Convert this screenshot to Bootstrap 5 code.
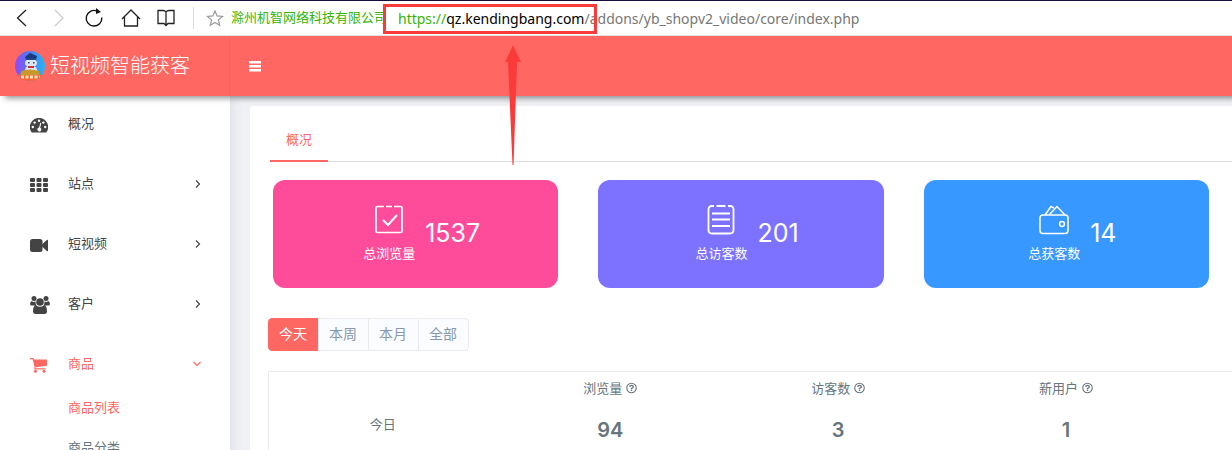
<!DOCTYPE html>
<html lang="zh-CN">
<head>
<meta charset="utf-8">
<meta name="viewport" content="width=device-width, initial-scale=1">
<title>短视频智能获客</title>
<link href="https://cdn.jsdelivr.net/npm/bootstrap@5.3.0/dist/css/bootstrap.min.css" rel="stylesheet">
<style>
:root{--brand:#ff6862;--ink:#444;--muted:#67757c}
body{font-family:"Open Sans","Noto Sans CJK SC",sans-serif;font-size:13px;color:var(--muted);background:#f0f1f5}
svg{display:block}
a{text-decoration:none}
.shell{height:100vh;overflow:hidden}
/* browser toolbar */
.toolbar{height:36px;border-top:1px solid #170b3b;border-bottom:1px solid #e3e3e3;z-index:5}
.toolbar button,.plain{border:0;background:none;padding:0}
.tools{gap:15px;padding-left:12px}
.rule{width:1px;height:22px;background:#ddd;margin-left:17px}
.star{margin:0 7px 0 12px}
.company{color:#35b503;width:167px}
.address{font-family:"Noto Sans","Noto Sans CJK SC",sans-serif;font-size:14px;color:#777}
.scheme{color:#35b503}
.host{color:#000}
.frame{left:-15px;top:-4px;width:214px;height:30px;border:3px solid #fb3a3a}
.pointer{left:106px;top:37px}
/* header */
.topbar{height:60px;background:var(--brand);box-shadow:5px 2px 6px rgba(0,0,0,.45);z-index:4}
.brand{width:230px;padding-left:15px;gap:5px;font-size:20px;font-weight:300;color:#fff;border-right:1px solid #f4635e}
.brand:hover{color:#fff}
.burger{margin-left:19px}
/* sidebar */
.side{width:230px;background:#fff;box-shadow:1px 0 12px rgba(60,70,110,.12);z-index:2}
.side-link{height:60px;padding:0 29px 4px 30px;color:var(--ink)}
.side-link .pic{width:38px;padding-top:2px}
.side-link.on,.sub-link.on{color:var(--brand)}
.sub-link{height:24px;margin-bottom:16px;padding-left:68px;color:var(--muted)}
/* content */
.panel{margin:10px 0 0 20px;border-radius:4px 0 0 0;min-width:0}
.tabs{margin:14px 0 0 20px;border-bottom:1px solid #dcdfe0}
.tabs .nav-link{height:42px;padding:0 16px;line-height:38px;color:var(--brand);border-bottom:2px solid var(--brand);margin-bottom:-1px}
.stats{display:grid;grid-template-columns:repeat(3,1fr);gap:40px;padding:18px 23px 0}
.stat{height:108px;border-radius:12px;color:#fff;gap:10px;padding-left:12px}
.pink{background:#ff4c9a}.violet{background:#7d71ff}.blue{background:#3799ff}
.stat svg{margin:0 auto 8px}
.figure-num{font-family:Inter,sans-serif;font-size:25px}
.body-pad{padding:30px 0 0 18px}
.range .btn{font-size:14px;line-height:21px;padding:4px 11px 6px 10px;color:#8898aa;background:#fbfcff;border-color:#e9ebec;border-radius:4px}
.range .btn.on{background:var(--brand);border-color:var(--brand);color:#fff}
.report{margin-top:20px;table-layout:fixed;border:1px solid #e9ebec;border-right:0;--bs-table-color:var(--muted)}
.report td{width:23.65%;border:0;text-align:center;padding:6px 0;height:106px;vertical-align:top}
.report td:last-child{width:5.4%}
.report .day{vertical-align:middle}
.metric{line-height:20px}
.total{font-family:Inter,sans-serif;font-size:20px;font-weight:600;line-height:24px;margin-top:20px}
</style>
</head>
<body>
<div class="shell d-flex flex-column">
  <div class="toolbar d-flex align-items-center bg-white position-relative flex-shrink-0">
    <div class="tools d-flex align-items-center">
      <button aria-label="后退"><svg width="20" height="20" fill="none" stroke="#222" stroke-width="1.3"><path d="M14 2 5.500 10 14 18"/></svg></button>
      <button aria-label="前进"><svg width="20" height="20" fill="none" stroke="#ccc" stroke-width="1.3"><path d="M8 2l8 8-8 8"/></svg></button>
      <button aria-label="刷新"><svg width="24" height="20" viewBox="0 0 24 20" fill="none" stroke="#111" stroke-width="1.4"><path d="M15 3A7.800 7.800 0 1 0 19.800 9.500"/><path d="M14 0v6l5-2z" fill="#111" stroke="none"/></svg></button>
      <button aria-label="主页"><svg width="20" height="20" fill="none" stroke="#222" stroke-width="1.3"><path d="M1 11 10 2l9 9M3.500 9v9h13V9"/></svg></button>
      <button aria-label="收藏夹"><svg width="20" height="20" fill="none" stroke="#222" stroke-width="1.3"><path d="M10 4Q9 2.500 7 2.500H2v13h6l2 2 2-2h6v-13h-5Q11 2.500 10 4v13"/></svg></button>
    </div>
    <div class="rule"></div>
    <button class="star" aria-label="收藏"><svg width="18" height="18" viewBox="0 0 18 18" fill="none" stroke="#999" stroke-width="1.2"><path d="m9 2 2.100 4.900 5.400.5-4.100 3.500 1.300 5.300L9 13.400l-4.700 2.800 1.300-5.300L1.500 7.400l5.400-.5z"/></svg></button>
    <span class="company text-nowrap">滁州机智网络科技有限公司</span>
    <div class="address position-relative text-nowrap"><span class="scheme">https://</span><span class="host">qz.kendingbang.com</span>/addons/yb_shopv2_video/core/index.php
      <span class="frame position-absolute"></span>
      <svg class="pointer position-absolute" width="18" height="120" viewBox="0 0 18 120" fill="#fb3a3a"><path d="M9 0l8 17h-4L9.500 120h-1L4 17H1z"/></svg>
    </div>
  </div>

  <header class="topbar d-flex align-items-center position-relative flex-shrink-0">
    <a href="#" class="brand d-flex align-items-center h-100 text-nowrap">
      <svg width="30" height="30" viewBox="0 0 30 30">
        <defs><linearGradient id="g" x1="0" x2="1"><stop offset="0" stop-color="#9348f2"/><stop offset=".45" stop-color="#5577f4"/><stop offset="1" stop-color="#22b5f5"/></linearGradient><clipPath id="c"><circle cx="15" cy="15" r="15"/></clipPath></defs>
        <g clip-path="url(#c)"><path fill="url(#g)" d="M0 0h30v30H0z"/><path fill="#193a80" d="M10 6l5-4 7 3-1 4H11z"/><ellipse cx="16" cy="12" rx="6" ry="4.500" fill="#dfe6f2"/><path fill="#23458e" d="M11 7h10v2H11zM13 11h1.500v1.500H13zM18 11h1.500v1.500H18z"/><path fill="#dde4f4" d="M11 16h10l2 5H9z"/><path fill="#d22c3a" d="M13 15h6v2h-6z"/><path fill="#c9972b" d="M6 20q9-3 18 0l1 5H5z"/><path fill="#ff6828" d="M0 24h30v6H0z"/><path stroke="#ffe0b8" stroke-width="3" stroke-dasharray="3 1.500" d="M6 26h19"/></g>
      </svg>
      <span>短视频智能获客</span>
    </a>
    <button class="plain burger" aria-label="菜单"><svg width="12" height="12" fill="#fff"><path d="M0 1h12v2.500H0zM0 5h12v2.500H0zM0 9h12v2.500H0z"/></svg></button>
  </header>

  <div class="d-flex flex-grow-1">
    <nav class="side flex-shrink-0 position-relative">
      <a href="#" class="side-link d-flex align-items-center"><span class="pic"><svg width="18" height="15" viewBox="0 0 18 15"><path fill="currentColor" d="M9 0a9 9 0 0 0-7.600 14q.3.500.800.500h13.600q.5 0 .8-.5A9 9 0 0 0 9 0"/><g fill="#fff"><circle cx="2.800" cy="9" r="1.200"/><circle cx="4.600" cy="4.600" r="1.200"/><circle cx="9" cy="2.700" r="1.200"/><circle cx="13.400" cy="4.600" r="1.200"/><circle cx="15.200" cy="9" r="1.200"/><path d="M10.300 4.800l1 .3-1.100 4.600a2 2 0 1 1-1.100-.2z"/></g></svg></span>概况</a>
      <a href="#" class="side-link d-flex align-items-center"><span class="pic"><svg width="18" height="14" fill="currentColor"><g id="r"><rect width="5" height="4" rx="1"/><rect x="6.500" width="5" height="4" rx="1"/><rect x="13" width="5" height="4" rx="1"/></g><use href="#r" y="5"/><use href="#r" y="10"/></svg></span>站点<svg class="ms-auto" width="6" height="8" fill="none" stroke="currentColor" stroke-width="1.200"><path d="M1 .5 4.500 4 1 7.500"/></svg></a>
      <a href="#" class="side-link d-flex align-items-center"><span class="pic"><svg width="18" height="13" fill="currentColor"><rect width="12.500" height="13" rx="2.500"/><path d="M12 5.500 17 .8q1-.5 1 .5v10.400q0 1-1 .5L12 7.500z"/></svg></span>短视频<svg class="ms-auto" width="6" height="8" fill="none" stroke="currentColor" stroke-width="1.200"><path d="M1 .5 4.500 4 1 7.500"/></svg></a>
      <a href="#" class="side-link d-flex align-items-center"><span class="pic"><svg width="20" height="18" viewBox="0 0 20 18" fill="currentColor"><circle cx="4" cy="2.500" r="2.500"/><circle cx="16" cy="2.500" r="2.500"/><circle cx="10" cy="6" r="3.800"/><path d="M1.500 5q2.500 1.500 4 .5 0 2.500 1 4H2Q0 9.500 0 8t1.500-3M18.500 5q-2.500 1.500-4 .5 0 2.500-1 4H18q2 0 2-1.500T18.500 5M6 9.300q4 3 8 0 3 .7 3 5.700 0 3-2.500 3h-9Q3 18 3 15q0-5 3-5.700"/></svg></span>客户<svg class="ms-auto" width="6" height="8" fill="none" stroke="currentColor" stroke-width="1.200"><path d="M1 .5 4.500 4 1 7.500"/></svg></a>
      <a href="#" class="side-link on d-flex align-items-center"><span class="pic"><svg width="18" height="15" viewBox="0 0 18 15" fill="currentColor"><path d="M0 0h3.500l.5 1.500h13v6.300L5.300 9.200l.2 1.100H15.500v1.200H4.200L4.500 9 2.700 1.300H0z"/><circle cx="5.500" cy="13.300" r="1.500"/><circle cx="14" cy="13.300" r="1.500"/></svg></span>商品<svg class="ms-auto" width="8" height="6" fill="none" stroke="currentColor" stroke-width="1.200"><path d="M.5 1 4 4.500 7.500 1"/></svg></a>
      <a href="#" class="sub-link on d-flex align-items-center">商品列表</a>
      <a href="#" class="sub-link d-flex align-items-center">商品分类</a>
    </nav>

    <main class="panel bg-white flex-grow-1">
      <ul class="tabs nav"><li><a href="#" class="nav-link">概况</a></li></ul>
      <div class="stats">
        <div class="stat pink d-flex align-items-center justify-content-center">
          <div><svg width="30" height="32" viewBox="0 0 30 32" fill="none" stroke="#fff" stroke-width="2"><path d="M10 2.500H3.500Q2 2.500 2 4v23q0 1.500 1.500 1.500h23q1.500 0 1.500-1.500V4q0-1.500-1.500-1.500H20M12 2.500h6" stroke-width="1.700"/><path d="M9 16l5 5 9-10"/></svg>总浏览量</div>
          <span class="figure-num">1537</span>
        </div>
        <div class="stat violet d-flex align-items-center justify-content-center">
          <div><svg width="30" height="32" viewBox="0 0 30 32" fill="none" stroke="#fff" stroke-width="1.800"><path d="M8 2H6Q2.500 2 2.500 5.500V26q0 3.500 3.500 3.500h18q3.500 0 3.500-3.500V5.500Q27.500 2 24 2h-2M10.500 2h9M6 9.500h18M6 15.500h18M6 22h18"/></svg>总访客数</div>
          <span class="figure-num">201</span>
        </div>
        <div class="stat blue d-flex align-items-center justify-content-center">
          <div><svg width="30" height="32" viewBox="0 0 30 32" fill="none" stroke="#fff" stroke-width="1.500"><rect x="1" y="11" width="28" height="18.500" rx="3"/><circle cx="23" cy="20" r="2.400"/><path d="M6 11l6-8.500L15 4M10 11l8-8.500 8 8.500"/></svg>总获客数</div>
          <span class="figure-num">14</span>
        </div>
      </div>
      <div class="body-pad">
        <div class="range btn-group">
          <button class="btn on">今天</button><button class="btn">本周</button><button class="btn">本月</button><button class="btn">全部</button>
        </div>
        <table class="report table mb-0">
          <tbody><tr>
            <td class="day">今日</td>
            <td><div class="metric d-flex align-items-center justify-content-center gap-1">浏览量<svg width="11" height="12" viewBox="0 0 12 12" fill="none" stroke="currentColor" stroke-width="1.200"><circle cx="6" cy="6" r="5.200"/><path d="M4 4.800Q4.200 3.200 6 3.200T8 4.700Q8 5.600 6 6.300V7.300M6 8v1.400" stroke-width="1.500"/></svg></div><div class="total">94</div></td>
            <td><div class="metric d-flex align-items-center justify-content-center gap-1">访客数<svg width="11" height="12" viewBox="0 0 12 12" fill="none" stroke="currentColor" stroke-width="1.200"><circle cx="6" cy="6" r="5.200"/><path d="M4 4.800Q4.200 3.200 6 3.200T8 4.700Q8 5.600 6 6.300V7.300M6 8v1.400" stroke-width="1.500"/></svg></div><div class="total">3</div></td>
            <td><div class="metric d-flex align-items-center justify-content-center gap-1">新用户<svg width="11" height="12" viewBox="0 0 12 12" fill="none" stroke="currentColor" stroke-width="1.200"><circle cx="6" cy="6" r="5.200"/><path d="M4 4.800Q4.200 3.200 6 3.200T8 4.700Q8 5.600 6 6.300V7.300M6 8v1.400" stroke-width="1.500"/></svg></div><div class="total">1</div></td>
            <td></td>
          </tr></tbody>
        </table>
      </div>
    </main>
  </div>
</div>
<script src="https://cdn.jsdelivr.net/npm/bootstrap@5.3.0/dist/js/bootstrap.bundle.min.js"></script>
</body>
</html>
